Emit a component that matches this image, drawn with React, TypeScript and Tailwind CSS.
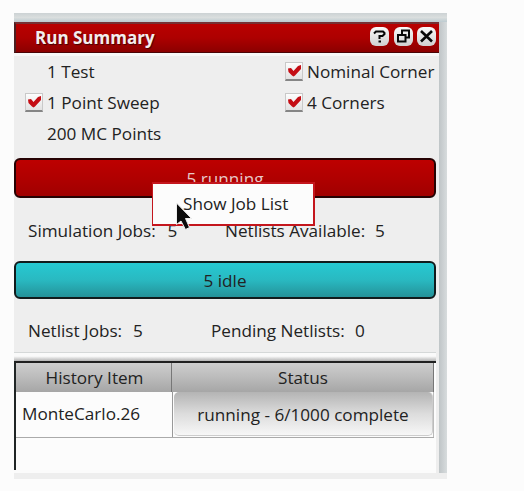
import type { ReactNode } from 'react';

function Check({ checked = true }: { checked?: boolean }) {
  if (!checked) return <span className="w-[18px] shrink-0" />;
  return (
    <span className="flex h-[19px] w-[18px] shrink-0 items-center justify-center border border-b-2 border-[#c9c9c9] border-b-[#858585] bg-gradient-to-b from-[#fdfdfd] to-[#e2e2e2]">
      <svg width="16" height="16" viewBox="0 0 16 16">
        <path d="M2 5.5L5 5L7.5 8L12 3L15 2V6L9 12.5L7.5 13.5L6 12.5L2.5 9Z" fill="#c40d14" />
      </svg>
    </span>
  );
}

function TitleButton({ children }: { children: ReactNode }) {
  return (
    <span className="flex h-[19px] w-[19px] items-center justify-center rounded-[6px] bg-gradient-to-b from-[#fafafa] to-[#d0d0d0]">
      <svg width="19" height="19" viewBox="0 0 19 19" fill="none" stroke="#080808" strokeWidth="2">
        {children}
      </svg>
    </span>
  );
}

function Option({ label, checked }: { label: string; checked?: boolean }) {
  return (
    <div className="flex h-[31px] items-center gap-1 whitespace-nowrap">
      <Check checked={checked} />
      <span>{label}</span>
    </div>
  );
}

export default function App() {
  return (
    <div className="h-[491px] w-[524px] overflow-hidden bg-[#fcfcfc] pt-[13px] pl-[14px] font-['Open_Sans','Noto_Sans',sans-serif] text-[17.15px] leading-6 text-[#222]">
      <div className="relative flex h-[466px] w-[433px] flex-col bg-[#eeeeee]">
        <div className="h-[9px] w-full shrink-0 bg-gradient-to-b from-[#ccd2d4] via-[#dadede] to-[#bdcbd0]" />
        <div className="flex h-[451px] shrink-0">
          <main className="flex w-[425px] flex-col">
            <header className="flex h-[31px] shrink-0 items-center border-t-2 border-b border-l-2 border-t-[#773033] border-b-[#4b0507] border-l-[#4b2022] bg-gradient-to-b from-[#b90000] via-[#ad0000] to-[#8b0000] pr-[3px] pl-[19px]">
              <h1 className="flex-1 text-[17px] font-bold text-[#f4eded] [text-shadow:1px_1px_1px_#400]">Run Summary</h1>
              <div className="relative bottom-[1.5px] flex gap-[4.5px]">
                <TitleButton>
                  <path d="M4 6.5L6 4.5H13L14.5 6V7L12.5 9H9.5V12" />
                  <path d="M8.5 14.5H11" />
                </TitleButton>
                <TitleButton>
                  <path d="M8 7V3.5H15V10.5H12" />
                  <path d="M4 8H11.5V14.5H4Z" />
                </TitleButton>
                <TitleButton>
                  <path d="M4 4L15 14.5M15 4L4 14.5" strokeWidth="2.6" />
                </TitleButton>
              </div>
            </header>

            <section className="flex h-[105px] shrink-0 border-t-[3px] border-[#f8f8f8] pl-[11px]">
              <div className="w-[260px]">
                <Option label="1 Test" checked={false} />
                <Option label="1 Point Sweep" />
                <Option label="200 MC Points" checked={false} />
              </div>
              <div>
                <Option label="Nominal Corner" />
                <Option label="4 Corners" />
              </div>
            </section>

            <div className="flex h-[40px] w-[422px] shrink-0 items-center justify-center rounded-[6px] border-2 border-[#260203] bg-gradient-to-b from-[#bd0000] via-[#b00000] to-[#a00000] pt-px text-[#e8c8c8]">
              5 running
            </div>
            <div className="flex h-[63px] shrink-0 items-center pt-[3px] pl-[14px] whitespace-nowrap">
              <span className="w-[139.5px]">Simulation Jobs:</span>
              <span className="w-[57.5px]">5</span>
              <span className="w-[150px]">Netlists Available:</span>
              <span>5</span>
            </div>
            <div className="flex h-[38px] w-[422px] shrink-0 items-center justify-center rounded-[6px] border-2 border-[#111b1c] bg-gradient-to-b from-[#26c9d2] via-[#29b9c1] to-[#249299] pt-px">
              5 idle
            </div>
            <div className="flex h-[53px] shrink-0 items-center pt-[10px] pl-[14px] whitespace-nowrap">
              <span className="w-[105px]">Netlist Jobs:</span>
              <span className="w-[78px]">5</span>
              <span className="w-[144px]">Pending Netlists:</span>
              <span>0</span>
            </div>

            <div className="h-[9px] w-[422px] shrink-0 border-t border-[#d5d8d8] bg-gradient-to-b from-[#fafafa] from-40% to-[#b4b4b4]" />
            <div className="h-[109px] w-[422px] shrink-0 border-t-2 border-l-2 border-t-[#202020] border-l-[#202525] bg-[#fcfcfc] pr-[2px]">
              <div className="flex h-[29px] bg-gradient-to-b from-[#cecece] via-[#bbb] to-[#a6a6a6] text-center">
                <div className="flex w-[156px] items-center justify-center border-r border-[#777] pl-[2px]">History Item</div>
                <div className="flex flex-1 items-center justify-center border-r border-[#777] pl-px">Status</div>
              </div>
              <div className="flex h-[46px] border-b border-[#aaa]">
                <div className="flex w-[157px] items-center border-r border-[#999] pb-px pl-[6px]">MonteCarlo.26</div>
                <div className="flex flex-1 border-r border-[#bbb] pl-px">
                  <div className="flex h-[44px] flex-1 items-center justify-center rounded-[5px] border-r border-b border-[#ccc] bg-gradient-to-b from-[#b4b4b4] via-[#dcdcdc] to-[#f7f7f7] pt-[2px] whitespace-nowrap">
                    running - 6/1000 complete
                  </div>
                </div>
              </div>
            </div>
            <div className="w-[422px] flex-1 bg-[#fbfbfb]" />
          </main>
          <div className="w-[8px] bg-gradient-to-r from-[#bfc5c7] via-[#cbd0d2] to-[#d7dcdd]" />
        </div>

        <div className="absolute top-[169px] left-[138px] flex h-[44px] w-[163px] items-center border-t-2 border-r-2 border-b-2 border-l border-[#c4161d] bg-[#fcfcfc] pl-[30px] whitespace-nowrap">
          Show Job List
        </div>
        <svg className="absolute top-[189px] left-[161px]" width="19" height="32" viewBox="0 0 19 32">
          <path d="M1.5 1V22.5L6 19L10.5 27.5L14.5 25.5L10.5 16.5H16.5Z" fill="#0b0b0b" stroke="#eeeeee" strokeWidth="1" />
        </svg>
      </div>
    </div>
  );
}
